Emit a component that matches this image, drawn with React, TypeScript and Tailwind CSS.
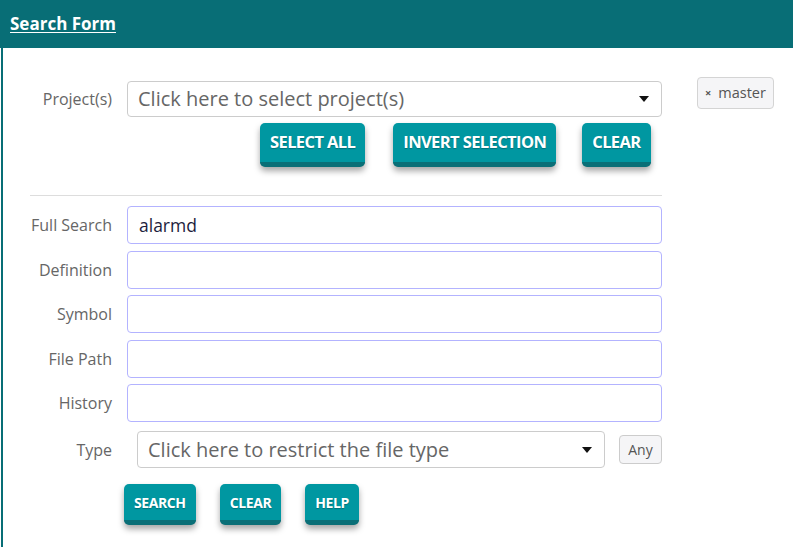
import React from "react";

const Caret = () => (
  <svg width="10" height="6" viewBox="0 0 10 6" className="shrink-0">
    <path d="M0 0 L10 0 L5 6 Z" fill="#111" />
  </svg>
);

const TealButton = ({ label, small }: { label: string; small?: boolean }) => (
  <button
    className={
      "bg-[#0097a1] text-white font-bold rounded-[5px] border-b-[5px] border-[#0a6f77] shadow-[0_4px_6px_rgba(0,0,0,0.35)] [text-shadow:0_1px_1px_rgba(0,0,0,0.25)] " +
      (small
        ? "h-[41px] text-[14px] tracking-[-0.4px] px-[10px]"
        : "h-[44px] text-[16.5px] tracking-[-0.6px] px-[10px]")
    }
  >
    {label}
  </button>
);

const fields = ["Full Search", "Definition", "Symbol", "File Path", "History"];

export default function App() {
  return (
    <div className="min-h-[547px] bg-white font-['Open_Sans',sans-serif]">
      <div className="h-12 bg-[#086e76] flex items-center pl-[10px]">
        <a className="text-white font-bold text-[17px] underline underline-offset-2">
          Search Form
        </a>
      </div>
      <div className="ml-px border-l-2 border-[#086e76] min-h-[499px] pl-[27px] pt-[33px]">
        {/* projects */}
        <div className="flex items-start">
          <div className="w-[82px] h-9 flex items-center justify-end text-[16px] text-[#666]">
            Project(s)
          </div>
          <div className="ml-[15px] w-[535px]">
            <div className="h-9 border border-[#ccc] rounded-[4px] flex items-center justify-between pl-[10px] pr-[12px] text-[20px] text-[#666]">
              <span>Click here to select project(s)</span>
              <Caret />
            </div>
            <div className="mt-[6px] ml-[133px] flex">
              <TealButton label="SELECT ALL" />
              <div className="ml-[28px]">
                <TealButton label="INVERT SELECTION" />
              </div>
              <div className="ml-[26px]">
                <TealButton label="CLEAR" />
              </div>
            </div>
          </div>
          <div className="ml-[35px] -mt-[4px] h-[32px] px-[7px] flex items-center gap-[7px] bg-[#f5f5f7] border border-[#d4d4d4] rounded-[4px] text-[14.5px] text-[#555]">
            <span className="text-[11px] font-bold">×</span>
            <span>master</span>
          </div>
        </div>

        <div className="mt-[28px] w-[632px] h-px bg-[#ddd]" />

        {/* text fields */}
        <div className="mt-[10px] flex flex-col gap-[6.5px]">
          {fields.map((f) => (
            <div key={f} className="flex items-center">
              <div className="w-[82px] text-right text-[16px] text-[#666]">{f}</div>
              <div className="ml-[15px] w-[535px] h-[38px] border border-[#b3b3ff] rounded-[4px] flex items-center pl-[11px] text-[17.5px] text-[#1d1d3d]">
                {f === "Full Search" ? "alarmd" : ""}
              </div>
            </div>
          ))}
        </div>

        {/* type */}
        <div className="mt-[9px] flex items-center">
          <div className="w-[82px] text-right text-[16px] text-[#666]">Type</div>
          <div className="ml-[25px] w-[468px] h-[37px] border border-[#ccc] rounded-[4px] flex items-center justify-between pl-[10px] pr-[12px] text-[20px] text-[#666]">
            <span>Click here to restrict the file type</span>
            <Caret />
          </div>
          <div className="ml-[14px] h-[29px] w-[43px] flex items-center justify-center bg-[#f5f5f7] border border-[#ccc] rounded-[4px] text-[14px] text-[#555]">
            Any
          </div>
        </div>

        {/* actions */}
        <div className="mt-[16px] ml-[94px] flex gap-[24px]">
          <TealButton label="SEARCH" small />
          <TealButton label="CLEAR" small />
          <TealButton label="HELP" small />
        </div>
      </div>
    </div>
  );
}
